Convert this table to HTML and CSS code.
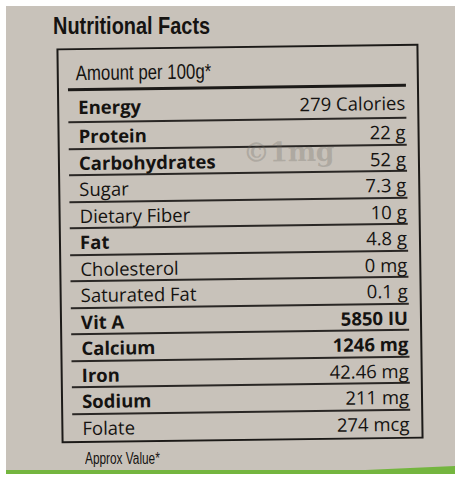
FILE: index.html
```html
<!DOCTYPE html>
<html lang="en">
<head>
<meta charset="utf-8">
<title>Nutritional Facts</title>
<link rel="stylesheet" href="styles.css">
</head>
<body>
<div class="photo">
  <h1 class="title"><span>Nutritional Facts</span></h1>
  <div class="label">
    <div class="amount"><span>Amount per 100g*</span></div>
    <div class="rule"></div>
    <div class="rows">
      <div class="row first b"><span class="name">Energy</span><span class="val">279 Calories</span></div>
      <div class="row b"><span class="name">Protein</span><span class="val">22 g</span></div>
      <div class="row b"><span class="name">Carbohydrates</span><span class="val">52 g</span></div>
      <div class="row"><span class="name">Sugar</span><span class="val">7.3 g</span></div>
      <div class="row"><span class="name">Dietary Fiber</span><span class="val">10 g</span></div>
      <div class="row b"><span class="name">Fat</span><span class="val">4.8 g</span></div>
      <div class="row"><span class="name">Cholesterol</span><span class="val">0 mg</span></div>
      <div class="row"><span class="name">Saturated Fat</span><span class="val">0.1 g</span></div>
      <div class="row b"><span class="name">Vit A</span><span class="val bold">5850 IU</span></div>
      <div class="row b"><span class="name">Calcium</span><span class="val bold">1246 mg</span></div>
      <div class="row b"><span class="name">Iron</span><span class="val">42.46 mg</span></div>
      <div class="row b"><span class="name">Sodium</span><span class="val">211 mg</span></div>
      <div class="row last"><span class="name">Folate</span><span class="val">274 mcg</span></div>
    </div>
    <div class="watermark">©1mg</div>
  </div>
  <div class="note"><span>Approx Value*</span></div>
  <div class="green"></div>
</div>
</body>
</html>
```
FILE: styles.css
```css
html, body {
  margin: 0;
  padding: 0;
  background: #ffffff;
}

.photo {
  margin: 6px 6px 0;
  height: 468px;
  background: #c8c2ba;
  display: flex;
  flex-direction: column;
  position: relative;
  overflow: hidden;
  color: #151311;
}

.title {
  margin: 0 0 0 47px;
  padding-top: 8px;
  flex-shrink: 0;
  font: bold 24px/24px "Liberation Sans", Arial, sans-serif;
  white-space: nowrap;
}

.title span {
  display: inline-block;
  transform: scaleX(0.83);
  transform-origin: left center;
}

.label {
  position: relative;
  flex-shrink: 0;
  margin: 8px 0 0 53px;
  width: 362px;
  box-sizing: border-box;
  border: 2px solid #1c1a18;
  padding: 12px 11px 0 9px;
  transform: rotate(-0.75deg);
}

.amount {
  padding-left: 8px;
  font: 21px/21px "Liberation Sans", Arial, sans-serif;
  white-space: nowrap;
}

.amount span {
  display: inline-block;
  transform: scaleX(0.8);
  transform-origin: left center;
}

.rule {
  margin-top: 5px;
  height: 3px;
  background: #1c1a18;
}

.row {
  display: flex;
  justify-content: space-between;
  align-items: flex-start;
  box-sizing: border-box;
  height: 26.5px;
  padding: 1px 1px 0 10px;
  border-bottom: 2px solid #2a2725;
  font: 400 18.5px/24px "Open Sans", "DejaVu Sans", sans-serif;
  white-space: nowrap;
}

.row.first {
  height: 32px;
  padding-top: 4px;
}

.row.last {
  height: 26px;
  border-bottom: 0;
}

.row.b .name {
  font-weight: 700;
}

.val.bold {
  font-weight: 700;
}

.watermark {
  position: absolute;
  left: 183px;
  top: 91px;
  font: bold 27px/27px "DejaVu Serif", serif;
  color: rgba(110, 106, 100, 0.28);
  letter-spacing: -0.5px;
}

.note {
  flex-shrink: 0;
  margin: 10px 0 0 79px;
  font: 16px/15px "Liberation Sans", Arial, sans-serif;
  white-space: nowrap;
}

.note span {
  display: inline-block;
  transform: scaleX(0.74);
  transform-origin: left center;
}

.green {
  margin-top: auto;
  flex-shrink: 0;
  height: 8px;
  background: #74b53f;
  clip-path: polygon(0 4px, 80% 4px, 100% 0, 100% 100%, 0 100%);
}
```
